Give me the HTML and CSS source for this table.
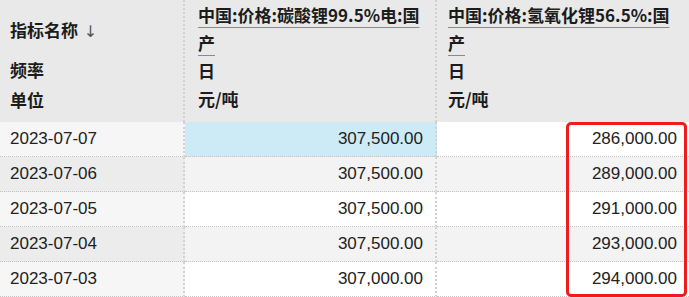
FILE: index.html
```html
<!DOCTYPE html>
<html lang="zh">
<head>
<meta charset="utf-8">
<link rel="stylesheet" href="styles.css">
</head>
<body>
<div class="sheet">
  <div class="grid">
    <div class="hcell hfirst">
      <div class="hname">指标名称 <span class="arrow">↓</span></div>
      <div class="hfreq">频率</div>
      <div class="hunit">单位</div>
    </div>
    <div class="hcell hcol">
      <div class="hline"><span class="link">中国:价格:碳酸锂99.5%电:国<br>产</span></div>
      <div class="hline">日</div>
      <div class="hline">元/吨</div>
    </div>
    <div class="hcell hcol hlast">
      <div class="hline"><span class="link">中国:价格:氢氧化锂56.5%:国<br>产</span></div>
      <div class="hline">日</div>
      <div class="hline">元/吨</div>
    </div>

    <div class="cell date odd">2023-07-07</div>
    <div class="cell num sel">307,500.00</div>
    <div class="cell num odd-w last">286,000.00</div>

    <div class="cell date even">2023-07-06</div>
    <div class="cell num even-w">307,500.00</div>
    <div class="cell num even-w last">289,000.00</div>

    <div class="cell date odd">2023-07-05</div>
    <div class="cell num odd-w">307,500.00</div>
    <div class="cell num odd-w last">291,000.00</div>

    <div class="cell date even">2023-07-04</div>
    <div class="cell num even-w">307,500.00</div>
    <div class="cell num even-w last">293,000.00</div>

    <div class="cell date odd">2023-07-03</div>
    <div class="cell num odd-w">307,000.00</div>
    <div class="cell num odd-w last">294,000.00</div>
  </div>
  <div class="highlight"></div>
</div>
</body>
</html>
```

FILE: styles.css
```css
* { box-sizing: border-box; }
html, body { margin: 0; padding: 0; background: #ffffff; }
body {
  font-family: "Liberation Sans", "Noto Sans CJK SC", sans-serif;
  color: #222222;
  width: 689px;
  height: 297px;
  overflow: hidden;
}
.sheet { position: relative; width: 689px; height: 297px; }
.grid {
  display: grid;
  grid-template-columns: 185px 252px 252px;
  grid-template-rows: 122px repeat(5, 35px);
}
.hcell {
  background: #e9e9e9;
  font-family: "Noto Sans CJK SC", "Liberation Sans", sans-serif;
  font-weight: 700;
  font-size: 17px;
  color: #1c1c1c;
}
.hfirst {
  border-right: 2px dotted #d2d2d2;
  padding-left: 10px;
  display: flex;
  flex-direction: column;
}
.hname { margin-top: 16px; line-height: 28px; }
.arrow { font-weight: 400; color: #555; margin-left: 2px; font-family: "DejaVu Sans", sans-serif; font-size: 16px; }
.hfreq { margin-top: 10px; line-height: 28px; }
.hunit { margin-top: 2px; line-height: 28px; }
.hcol {
  padding: 1px 8px 0 13px;
  border-right: 2px dotted #d2d2d2;
}
.hlast { border-right: none; padding-left: 11px; }
.hline { line-height: 28px; white-space: nowrap; }
.link {
  text-decoration: underline;
  text-decoration-color: #8a8a8a;
  text-decoration-thickness: 1px;
  text-underline-offset: 5px;
}
.cell {
  font-size: 17px;
  line-height: 34px;
  border-bottom: 1px dotted #c4c4c4;
  white-space: nowrap;
}
.date {
  padding-left: 10px;
  border-right: 2px dotted #d2d2d2;
}
.num {
  text-align: right;
  padding-right: 12px;
  border-right: 2px dotted #d2d2d2;
}
.num.last { border-right: none; padding-right: 12px; }
.odd { background: #f6f6f6; }
.even { background: #ececec; }
.odd-w { background: #ffffff; }
.even-w { background: #f3f3f3; }
.sel { background: #cdebf7; }
.highlight {
  position: absolute;
  left: 566px;
  top: 122px;
  width: 121px;
  height: 175px;
  border: 3px solid #ee1c1c;
  border-radius: 5px;
}
```
